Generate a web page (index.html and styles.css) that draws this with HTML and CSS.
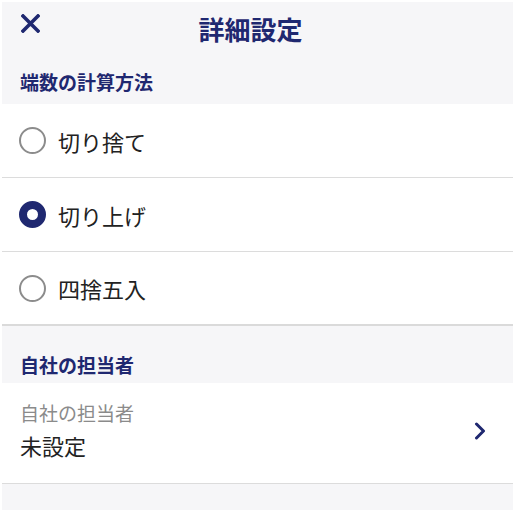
FILE: index.html
```html
<!DOCTYPE html>
<html lang="ja">
<head>
<meta charset="utf-8">
<link rel="stylesheet" href="styles.css">
</head>
<body>
<div class="screen">
  <header class="topbar">
    <button class="close" aria-label="閉じる">
      <svg width="19" height="19" viewBox="0 0 19 19"><path d="M2 2 L17 17 M17 2 L2 17" stroke="#1f2870" stroke-width="3.6" stroke-linecap="square" fill="none"/></svg>
    </button>
    <h1 class="title">詳細設定</h1>
  </header>

  <h2 class="section-title first">端数の計算方法</h2>
  <ul class="options">
    <li class="option"><span class="radio"></span><span class="option-label">切り捨て</span></li>
    <li class="option"><span class="radio checked"></span><span class="option-label">切り上げ</span></li>
    <li class="option last"><span class="radio"></span><span class="option-label">四捨五入</span></li>
  </ul>

  <h2 class="section-title second">自社の担当者</h2>
  <div class="person-row">
    <div class="person-text">
      <div class="person-label">自社の担当者</div>
      <div class="person-value">未設定</div>
    </div>
    <svg class="chevron" width="12" height="18" viewBox="0 0 12 18"><path d="M2.5 2 L9.5 9 L2.5 16" stroke="#1f2870" stroke-width="3" fill="none" stroke-linecap="round" stroke-linejoin="round"/></svg>
  </div>
  <div class="filler"></div>
</div>
</body>
</html>
```

FILE: styles.css
```css
* { box-sizing: border-box; }
html, body { background: #ffffff; }
body {
  margin: 2px;
  font-family: "Noto Sans CJK JP", "Noto Sans", sans-serif;
}
.screen {
  width: 511px;
  height: 508px;
  background: #f6f6f8;
  display: flex;
  flex-direction: column;
}
.topbar {
  display: flex;
  align-items: flex-start;
  padding: 9px 33px 0 19px;
  height: 45px;
  flex: none;
}
.close {
  border: 0;
  background: none;
  padding: 0;
  margin-top: 3px;
  width: 19px;
  height: 19px;
  display: block;
}
.close svg { display: block; }
.title {
  flex: 1;
  margin: 0 0 0 -19px;
  text-align: center;
  font-size: 26px;
  line-height: 36px;
  font-weight: 700;
  color: #1f2870;
}
.section-title {
  margin: 0;
  font-size: 19px;
  line-height: 26px;
  font-weight: 700;
  color: #1f2870;
  padding: 22px 18px 9px;
  flex: none;
}
.section-title.second { padding: 26px 18px 5px; }
.options {
  list-style: none;
  margin: 0;
  padding: 0;
  background: #ffffff;
  flex: none;
}
.option {
  height: 74px;
  display: flex;
  align-items: center;
  gap: 12px;
  padding: 0 17px;
  border-bottom: 1px solid #dcdcdc;
}
.option.last { border-bottom: 2px solid #dadada; }
.radio {
  width: 27px;
  height: 27px;
  border-radius: 50%;
  border: 2px solid #8c8c8c;
  flex: none;
}
.radio.checked {
  border: 8.5px solid #1f2870;
  background: #ffffff;
}
.option-label {
  font-size: 22px;
  line-height: 30px;
  color: #222222;
}
.person-row {
  background: #ffffff;
  display: flex;
  align-items: center;
  justify-content: space-between;
  padding: 18px 27px 23px 18px;
  border-bottom: 1px solid #dcdcdc;
  height: 101px;
  flex: none;
}
.person-text { display: flex; flex-direction: column; gap: 5px; }
.person-label {
  font-size: 19px;
  line-height: 24px;
  color: #8b8b8b;
}
.person-value {
  font-size: 22px;
  line-height: 30px;
  color: #222222;
}
.chevron { display: block; }
.filler { flex: 1; }
```
